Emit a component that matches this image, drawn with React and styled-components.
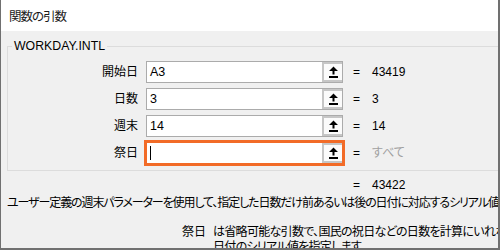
import React from "react";
import styled, { createGlobalStyle } from "styled-components";

const GlobalStyle = createGlobalStyle`
  html, body {
    margin: 0;
    padding: 0;
    background: #ffffff;
  }
  body {
    font-family: "Liberation Sans", "Noto Sans CJK JP", sans-serif;
    font-size: 12px;
    color: #000000;
    font-feature-settings: "palt";
  }
`;

const args = [
  { label: "開始日", text: "A3", value: "43419" },
  { label: "日数", text: "3", value: "3" },
  { label: "週末", text: "14", value: "14" },
  { label: "祭日", text: "", value: "すべて", muted: true, focused: true },
];

const UploadArrow = () => (
  <svg width="11" height="12" viewBox="0 0 11 12">
    <path d="M5.5 0.5 L10 5 H6.5 V8.5 H4.5 V5 H1 Z" fill="#000" />
    <rect x="1" y="10" width="9" height="2" fill="#000" />
  </svg>
);

const App = () => {
  return (
    <>
      <GlobalStyle />
      <StyledWindow>
        <StyledTitleBar>関数の引数</StyledTitleBar>
        <StyledBody>
          <StyledGroup>
            <StyledLegend>WORKDAY.INTL</StyledLegend>
            <StyledArgGrid>
              {args.map((a) => (
                <React.Fragment key={a.label}>
                  <StyledLabel>{a.label}</StyledLabel>
                  <StyledRefEdit $focused={a.focused}>
                    <StyledRefText>
                      {a.text}
                      {a.focused && <StyledCaret />}
                    </StyledRefText>
                    <StyledRefButton>
                      <UploadArrow />
                    </StyledRefButton>
                  </StyledRefEdit>
                  <StyledEquals>=</StyledEquals>
                  <StyledValue $muted={a.muted}>{a.value}</StyledValue>
                </React.Fragment>
              ))}
            </StyledArgGrid>
          </StyledGroup>

          <StyledResultRow>
            <StyledEquals>=</StyledEquals>
            <StyledValue>43422</StyledValue>
          </StyledResultRow>

          <StyledDescription>
            ユーザー定義の週末パラメーターを使用して、指定した日数だけ前あるいは後の日付に対応するシリアル値を返します。
          </StyledDescription>

          <StyledHelp>
            <StyledHelpName>祭日</StyledHelpName>
            <StyledHelpText>
              は省略可能な引数で、国民の祝日などの日数を計算にいれない場合に、その
              <br />
              日付のシリアル値を指定します。
            </StyledHelpText>
          </StyledHelp>
        </StyledBody>
      </StyledWindow>
    </>
  );
};

const StyledWindow = styled.div`
  width: 500px;
  height: 250px;
  box-sizing: border-box;
  background: #f0f0f0;
  border-left: 1px solid #707070;
  border-right: 2px solid #707070;
  border-bottom: 2px solid #707070;
  overflow: hidden;
`;

const StyledTitleBar = styled.div`
  height: 31px;
  background: #ffffff;
  display: flex;
  align-items: center;
  padding-left: 8px;
  font-size: 12.5px;
  letter-spacing: -1px;
  color: #1a1a1a;
`;

const StyledBody = styled.div`
  padding: 8px 0 0 6px;
`;

const StyledGroup = styled.fieldset`
  margin: 0;
  width: 540px;
  box-sizing: border-box;
  border: 1px solid #dcdcdc;
  padding: 8px 0 6px 0;
  min-width: 0;
`;

const StyledLegend = styled.legend`
  margin-left: 4px;
  padding: 0 2px;
  line-height: 14px;
  font-size: 12.3px;
  color: #000;
`;

const StyledArgGrid = styled.div`
  display: grid;
  grid-template-columns: 130px 197px 13px auto;
  grid-auto-rows: 22px;
  column-gap: 8px;
  row-gap: 5px;
  align-items: center;
`;

const StyledLabel = styled.div`
  text-align: right;
  line-height: 22px;
`;

const StyledRefEdit = styled.div`
  height: 22px;
  box-sizing: border-box;
  display: flex;
  background: #ffffff;
  border: 1px solid ${(p) => (p.$focused ? "#f26b27" : "#ababab")};
  box-shadow: ${(p) => (p.$focused ? "0 0 0 2px #f26b27" : "none")};
`;

const StyledRefText = styled.div`
  flex: 1;
  display: flex;
  align-items: center;
  padding-left: 3px;
  font-size: 12.5px;
`;

const StyledCaret = styled.span`
  display: inline-block;
  width: 1px;
  height: 14px;
  background: #000;
`;

const StyledRefButton = styled.div`
  width: 20px;
  box-sizing: border-box;
  border: 2px solid #c6c6c6;
  border-right: none;
  background: #fbfbfb;
  display: flex;
  align-items: center;
  justify-content: center;
`;

const StyledEquals = styled.div`
  padding-left: 2px;
  line-height: 14px;
`;

const StyledValue = styled.div`
  line-height: 14px;
  color: ${(p) => (p.$muted ? "#a0a0a0" : "#000")};
  white-space: nowrap;
`;

const StyledResultRow = styled.div`
  display: flex;
  gap: 6px;
  padding-left: 344px;
  margin-top: 7px;
  & > div:first-child {
    width: 13px;
  }
`;

const StyledDescription = styled.div`
  margin-top: 4px;
  line-height: 14px;
  letter-spacing: -1.1px;
  white-space: nowrap;
`;

const StyledHelp = styled.div`
  display: grid;
  grid-template-columns: 199px auto;
  column-gap: 7px;
  margin-top: 15px;
  line-height: 15px;
`;

const StyledHelpName = styled.div`
  text-align: right;
`;

const StyledHelpText = styled.div`
  white-space: nowrap;
  letter-spacing: -0.7px;
`;

export default App;
